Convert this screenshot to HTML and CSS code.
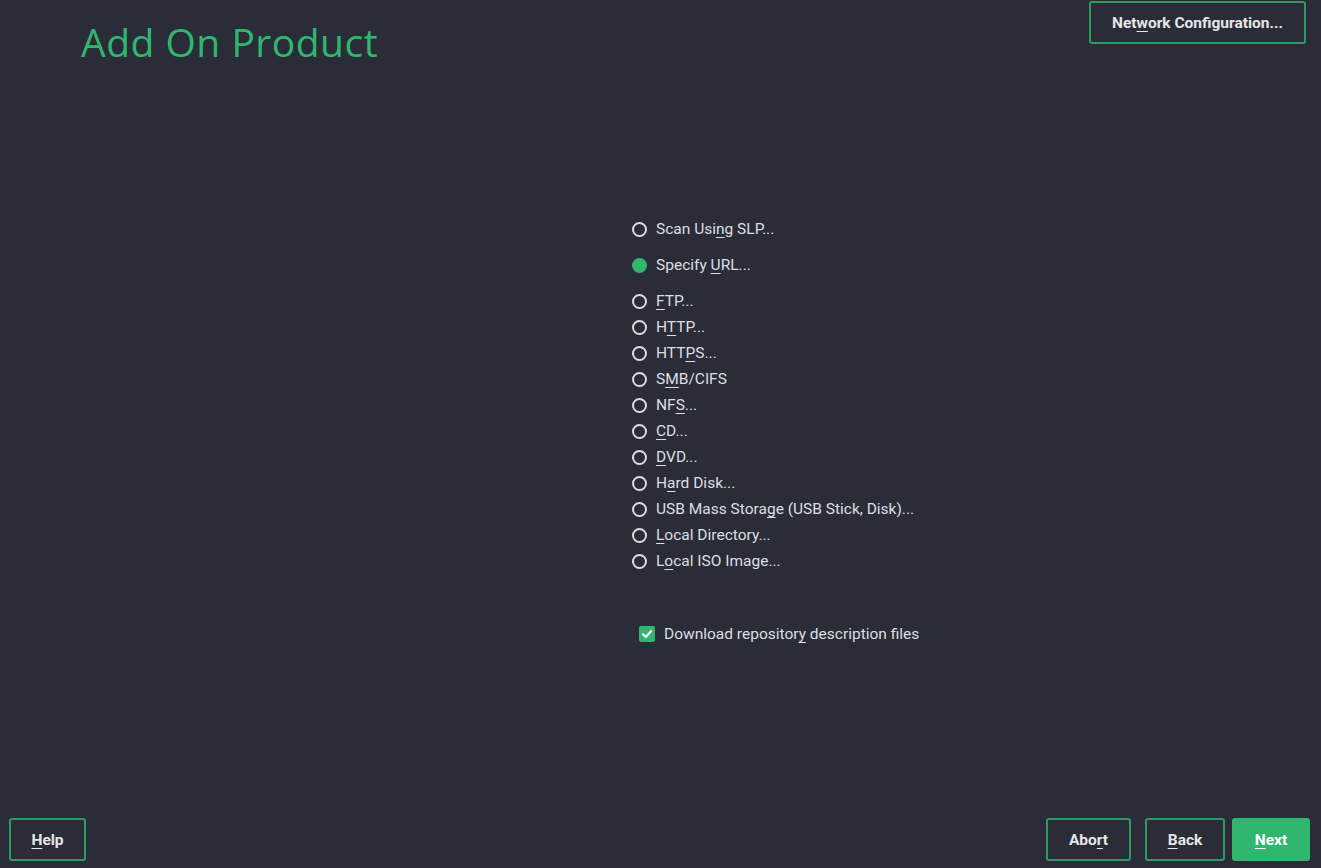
FILE: index.html
```html
<!DOCTYPE html>
<html lang="en">
<head>
    <meta charset="UTF-8">
    <title>Add On Product</title>
    <link rel="stylesheet" href="styles.css">
</head>
<body>
    <div class="page">
        <header class="top">
            <h1>Add On Product</h1>
            <button class="btn">Net<u>w</u>ork Configuration...</button>
        </header>

        <div class="main">
            <div class="options">
                <div class="group">
                    <label class="radio"><span class="dot"></span><span>Scan Usi<u>n</u>g SLP...</span></label>
                </div>
                <div class="group">
                    <label class="radio"><span class="dot on"></span><span>Specify <u>U</u>RL...</span></label>
                </div>
                <div class="group list">
                    <label class="radio"><span class="dot"></span><span><u>F</u>TP...</span></label>
                    <label class="radio"><span class="dot"></span><span>H<u>T</u>TP...</span></label>
                    <label class="radio"><span class="dot"></span><span>HTT<u>P</u>S...</span></label>
                    <label class="radio"><span class="dot"></span><span>S<u>M</u>B/CIFS</span></label>
                    <label class="radio"><span class="dot"></span><span>NF<u>S</u>...</span></label>
                    <label class="radio"><span class="dot"></span><span><u>C</u>D...</span></label>
                    <label class="radio"><span class="dot"></span><span><u>D</u>VD...</span></label>
                    <label class="radio"><span class="dot"></span><span>H<u>a</u>rd Disk...</span></label>
                    <label class="radio"><span class="dot"></span><span>USB Mass Stora<u>g</u>e (USB Stick, Disk)...</span></label>
                    <label class="radio"><span class="dot"></span><span><u>L</u>ocal Directory...</span></label>
                    <label class="radio"><span class="dot"></span><span>L<u>o</u>cal ISO Image...</span></label>
                </div>
                <label class="check">
                    <span class="box">
                        <svg width="12" height="12" viewBox="0 0 12 12"><path d="M2 6.3 L4.8 9 L10 3.2" fill="none" stroke="#fff" stroke-width="2.2" stroke-linecap="round" stroke-linejoin="round"/></svg>
                    </span>
                    <span>Download repositor<u>y</u> description files</span>
                </label>
            </div>
        </div>

        <footer class="bottom">
            <button class="btn"><u>H</u>elp</button>
            <div class="nav">
                <button class="btn abort">Abo<u>r</u>t</button>
                <button class="btn back"><u>B</u>ack</button>
                <button class="btn next"><u>N</u>ext</button>
            </div>
        </footer>
    </div>
</body>
</html>
```

FILE: styles.css
```css
body {
    margin: 0;
    background: #2a2d38;
    color: #dedee2;
    font-family: Roboto, "Noto Sans", sans-serif;
}
.page {
    height: 868px;
    display: flex;
    flex-direction: column;
}
u {
    text-decoration: underline;
    text-underline-offset: 3px;
    text-decoration-thickness: 1px;
}
.top {
    display: flex;
    justify-content: space-between;
    align-items: flex-start;
    padding: 1px 15px 0 81px;
}
.top h1 {
    margin: 14px 0 0 0;
    font-family: "Open Sans", Lato, sans-serif;
    font-weight: 400;
    font-size: 39px;
    letter-spacing: 0.5px;
    color: #30b66f;
}
.btn {
    font-family: Roboto, sans-serif;
    font-weight: 700;
    font-size: 15.5px;
    color: #e6e6e8;
    background: #2a2d38;
    border: 2px solid #2e9a62;
    border-radius: 3px;
    height: 43px;
    padding: 0 10px;
    cursor: pointer;
}
.top .btn {
    width: 217px;
}
.main {
    flex: 1;
    padding: 148px 0 0 632px;
}
.options {
    display: flex;
    flex-direction: column;
}
.group {
    display: flex;
    flex-direction: column;
    margin-bottom: 10px;
}
.radio {
    display: flex;
    align-items: center;
    gap: 9px;
    height: 26px;
    font-size: 15.5px;
}
.dot {
    width: 11px;
    height: 11px;
    border: 2px solid #dcdcde;
    border-radius: 50%;
}
.dot.on {
    width: 15px;
    height: 15px;
    border: 0;
    background: #30b66f;
}
.check {
    display: flex;
    align-items: center;
    gap: 9px;
    margin: 41px 0 0 7px;
    font-size: 15.5px;
}
.box {
    width: 16px;
    height: 16px;
    border-radius: 2px;
    background: #30b66f;
    display: flex;
    align-items: center;
    justify-content: center;
}
.bottom {
    display: flex;
    justify-content: space-between;
    align-items: flex-end;
    padding: 0 11px 7px 9px;
}
.bottom > .btn {
    width: 77px;
}
.nav {
    display: flex;
    gap: 14px;
}
.abort { width: 85px; }
.back { width: 80px; }
.next {
    width: 78px;
    margin-left: -7px;
    background: #30b66f;
    border-color: #30b66f;
    color: #fff;
}
```
